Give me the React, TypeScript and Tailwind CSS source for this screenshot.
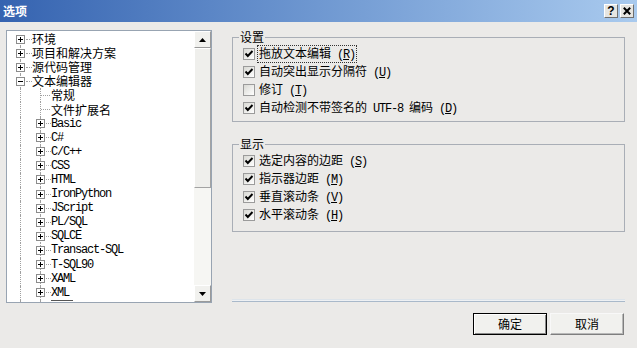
import React from "react";

const LINE = "border-[#a0a0a0]";

function Mono({ children }: { children: React.ReactNode }) {
  return (
    <span className="whitespace-pre font-['Liberation_Mono',monospace] text-[12px] tracking-[-1.2px]">
      {children}
    </span>
  );
}

function Mn({ k }: { k: string }) {
  return (
    <Mono>
      {" ("}
      <span className="underline underline-offset-1">{k}</span>
      {")"}
    </Mono>
  );
}

function PlusBox({ minus }: { minus?: boolean }) {
  return (
    <span className="relative z-10 flex h-[9px] w-[9px] shrink-0 items-center justify-center border border-[#8c8c8c] bg-white">
      <span className="absolute h-px w-[5px] bg-black" />
      {!minus && <span className="absolute h-[5px] w-px bg-black" />}
    </span>
  );
}

type Node = { label: string; mono?: boolean; level: 0 | 1; kind: "plus" | "minus" | "leaf" };

const nodes: Node[] = [
  { label: "环境", level: 0, kind: "plus" },
  { label: "项目和解决方案", level: 0, kind: "plus" },
  { label: "源代码管理", level: 0, kind: "plus" },
  { label: "文本编辑器", level: 0, kind: "minus" },
  { label: "常规", level: 1, kind: "leaf" },
  { label: "文件扩展名", level: 1, kind: "leaf" },
  { label: "Basic", level: 1, kind: "plus", mono: true },
  { label: "C#", level: 1, kind: "plus", mono: true },
  { label: "C/C++", level: 1, kind: "plus", mono: true },
  { label: "CSS", level: 1, kind: "plus", mono: true },
  { label: "HTML", level: 1, kind: "plus", mono: true },
  { label: "IronPython", level: 1, kind: "plus", mono: true },
  { label: "JScript", level: 1, kind: "plus", mono: true },
  { label: "PL/SQL", level: 1, kind: "plus", mono: true },
  { label: "SQLCE", level: 1, kind: "plus", mono: true },
  { label: "Transact-SQL", level: 1, kind: "plus", mono: true },
  { label: "T-SQL90", level: 1, kind: "plus", mono: true },
  { label: "XAML", level: 1, kind: "plus", mono: true },
  { label: "XML", level: 1, kind: "plus", mono: true },
];

function TreeRow({ n, first }: { n: Node; first: boolean }) {
  const label = n.mono ? <Mono>{n.label}</Mono> : <span>{n.label}</span>;
  if (n.level === 0) {
    return (
      <div className="flex h-[14.1px] shrink-0 items-center leading-[14px]">
        <div className="relative flex h-full w-[25px] items-center">
          <div
            className={`absolute left-[13px] ${first ? "top-1/2" : "top-0"} bottom-0 border-l border-dotted ${LINE}`}
          />
          <div className="ml-[9px]">
            <PlusBox minus={n.kind === "minus"} />
          </div>
          <div className={`ml-px w-[6px] border-t border-dotted ${LINE}`} />
        </div>
        {label}
      </div>
    );
  }
  return (
    <div className="flex h-[14.1px] shrink-0 items-center leading-[14px]">
      <div className="relative h-full w-[20px]">
        <div className={`absolute left-[13px] top-0 bottom-0 border-l border-dotted ${LINE}`} />
      </div>
      <div className="relative flex h-full w-[24px] items-center">
        <div className={`absolute left-[13px] top-0 bottom-0 border-l border-dotted ${LINE}`} />
        {n.kind === "leaf" ? (
          <div className={`ml-[14px] w-[9px] border-t border-dotted ${LINE}`} />
        ) : (
          <>
            <div className="ml-[9px]">
              <PlusBox />
            </div>
            <div className={`ml-px w-[5px] border-t border-dotted ${LINE}`} />
          </>
        )}
      </div>
      {label}
    </div>
  );
}

function ArrowBtn({ up }: { up?: boolean }) {
  return (
    <div className="flex h-[17px] w-[17px] shrink-0 items-center justify-center border border-t-white border-l-white border-r-[#9a9a9a] border-b-[#9a9a9a] bg-[#f1f1ee]">
      <svg width="7" height="4" viewBox="0 0 7 4">
        {up ? <polygon points="0,4 7,4 3.5,0" fill="#000" /> : <polygon points="0,0 7,0 3.5,4" fill="#000" />}
      </svg>
    </div>
  );
}

function Tree() {
  return (
    <div className="flex h-[273px] w-[206px] shrink-0 border border-[#98a4b2] bg-white">
      <div className="flex min-w-0 flex-1 flex-col overflow-hidden pt-px">
        {nodes.map((n, i) => (
          <TreeRow key={i} n={n} first={i === 0} />
        ))}
        {/* partially visible next row */}
        <div className="flex h-[6px] shrink-0 items-start overflow-hidden">
          <div className="relative h-full w-[20px]">
            <div className={`absolute left-[13px] top-0 bottom-0 border-l border-dotted ${LINE}`} />
          </div>
          <div className="relative h-full w-[24px]">
            <div className={`absolute left-[13px] top-0 bottom-0 border-l border-dotted ${LINE}`} />
          </div>
          <div className="h-[2px] w-[22px] border-t border-[#555]" />
        </div>
      </div>
      <div className="flex w-[17px] flex-col bg-[#f6f6f3]">
        <ArrowBtn up />
        <div className="h-[140px] border border-t-white border-l-white border-r-[#a3a3a3] border-b-[#a3a3a3] bg-[#efefec]" />
        <div className="flex-1" />
        <ArrowBtn />
      </div>
    </div>
  );
}

function CheckBox({ checked }: { checked: boolean }) {
  return (
    <span className="flex h-[12px] w-[12px] shrink-0 items-center justify-center border border-[#9b9b9b] bg-gradient-to-br from-[#d9d9d4] to-white">
      {checked && (
        <svg width="10" height="10" viewBox="0 0 10 10">
          <polyline points="1.5,4.5 3.8,7 8.5,2" fill="none" stroke="#000" strokeWidth="1.9" />
        </svg>
      )}
    </span>
  );
}

function CheckRow({
  checked,
  text,
  mn,
  focus,
  extra,
}: {
  checked: boolean;
  text: string;
  mn: string;
  focus?: boolean;
  extra?: React.ReactNode;
}) {
  return (
    <div className="flex h-[18px] items-center pl-[4px]">
      <CheckBox checked={checked} />
      <span
        className={`ml-[3px] inline-block whitespace-pre px-px leading-[13px] ${focus ? "outline-1 outline-dotted outline-[#333]" : ""}`}
      >
        {text}
        {extra}
        <Mn k={mn} />
      </span>
    </div>
  );
}

export default function App() {
  return (
    <div className="flex h-[348px] w-[637px] flex-col overflow-hidden bg-[#ebeae8] font-['Noto_Sans_CJK_SC','Noto_Sans',sans-serif] text-[12px] text-black">
      {/* title bar */}
      <div className="flex h-[22px] shrink-0 items-center justify-between bg-gradient-to-r from-[#3563b0] via-[#6f98d1] to-[#a9caee] pl-[3px] pr-[3px]">
        <span className="text-[12px] font-bold leading-none text-white">选项</span>
        <div className="flex gap-[2px]">
          <div className="flex h-[14px] w-[14px] items-center justify-center border border-t-white border-l-white border-r-[#6f6f6f] border-b-[#6f6f6f] bg-[#e6e5e1] font-['Liberation_Sans',sans-serif] text-[12px] font-bold leading-none">
            ?
          </div>
          <div className="flex h-[14px] w-[14px] items-center justify-center border border-t-white border-l-white border-r-[#6f6f6f] border-b-[#6f6f6f] bg-[#e6e5e1]">
            <svg width="8" height="8" viewBox="0 0 8 8">
              <path d="M0.8 0.8 L7.2 7.2 M7.2 0.8 L0.8 7.2" stroke="#000" strokeWidth="2" />
            </svg>
          </div>
        </div>
      </div>

      {/* body */}
      <div className="flex items-start pl-[6px] pt-[8px]">
        <Tree />
        <div className="ml-[20px] flex w-[393px] flex-col">
          <fieldset className="mt-[1px] border border-[#a9aeb6] px-[6px] pt-[2px] pb-[4px]">
            <legend className="px-px leading-[12px]">设置</legend>
            <CheckRow checked text="拖放文本编辑" mn="R" focus />
            <CheckRow checked text="自动突出显示分隔符" mn="U" />
            <CheckRow checked={false} text="修订" mn="T" />
            <CheckRow
              checked
              text="自动检测不带签名的"
              mn="D"
              extra={
                <>
                  <Mono>{" UTF-8 "}</Mono>
                  编码
                </>
              }
            />
          </fieldset>

          <fieldset className="mt-[16px] border border-[#a9aeb6] px-[6px] pt-[2px] pb-[7px]">
            <legend className="px-px leading-[12px]">显示</legend>
            <CheckRow checked text="选定内容的边距" mn="S" />
            <CheckRow checked text="指示器边距" mn="M" />
            <CheckRow checked text="垂直滚动条" mn="V" />
            <CheckRow checked text="水平滚动条" mn="H" />
          </fieldset>

          <div className="mt-[67px] h-[3px] border-t border-b border-t-[#dde4ea] border-b-[#a9b9ca] bg-[#eef1f4]" />

          <div className="mt-[11px] flex justify-end gap-[3px] pr-px">
            <button className="flex h-[22px] w-[74px] items-center justify-center border border-black bg-[#f1f1ee] shadow-[inset_1px_1px_0_#ffffff,inset_-1px_-1px_0_#8a8a8a]">
              确定
            </button>
            <button className="flex h-[22px] w-[74px] items-center justify-center border border-t-[#f8f8f8] border-l-[#f8f8f8] border-r-[#7e7e7e] border-b-[#7e7e7e] bg-[#f1f1ee] shadow-[inset_-1px_-1px_0_#b8b8b8]">
              取消
            </button>
          </div>
        </div>
      </div>
    </div>
  );
}
